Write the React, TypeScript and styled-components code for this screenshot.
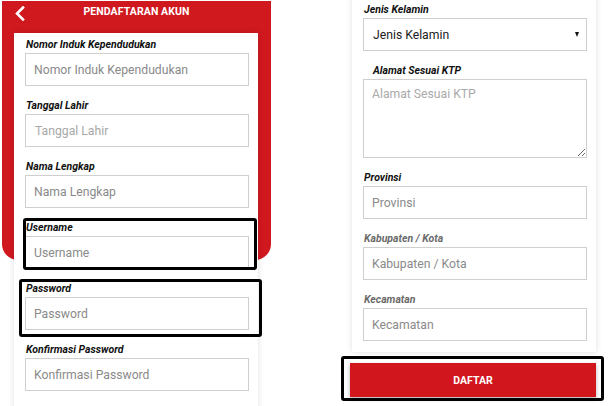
import React from "react"
import styled, { createGlobalStyle } from "styled-components"

const GlobalStyle = createGlobalStyle`
  html, body {
    margin: 0;
    padding: 0;
    background: #fff;
  }
  body {
    font-family: Roboto, "Liberation Sans", Arial, sans-serif;
  }
`

interface Box {
  top: number
  right: number
  bottom: number
  left: number
}

interface FieldProps {
  label: string
  placeholder: string
  muted?: boolean
  indent?: boolean
  faint?: boolean
}

const Field: React.FC<FieldProps> = ({ label, placeholder, muted, indent, faint }) => (
  <S.Field>
    <S.Label $muted={muted} $indent={indent}>{label}</S.Label>
    <S.Input placeholder={placeholder} $faint={faint} readOnly />
  </S.Field>
)

const BackIcon = () => (
  <svg width="10" height="15" viewBox="0 0 10 15">
    <polyline points="8,1.5 2,7.5 8,13.5" fill="none" stroke="#fff" strokeWidth="2.6" strokeLinecap="square" />
  </svg>
)

export default function App() {
  return (
    <>
      <GlobalStyle />
      <S.Page>
        <S.Screen>
          <S.Header>
            <S.TopBar>
              <S.BackButton>
                <BackIcon />
              </S.BackButton>
              <S.Title>PENDAFTARAN AKUN</S.Title>
            </S.TopBar>
          </S.Header>
          <S.Card $overlap>
            <Field label="Nomor Induk Kependudukan" placeholder="Nomor Induk Kependudukan" />
            <Field label="Tanggal Lahir" placeholder="Tanggal Lahir" faint />
            <Field label="Nama Lengkap" placeholder="Nama Lengkap" />
            <S.Highlight $box={{ top: -3, right: -8, bottom: -1, left: -2 }}>
              <Field label="Username" placeholder="Username" />
            </S.Highlight>
            <S.Highlight $box={{ top: -3, right: -13, bottom: -7, left: -6 }}>
              <Field label="Password" placeholder="Password" />
            </S.Highlight>
            <Field label="Konfirmasi Password" placeholder="Konfirmasi Password" />
          </S.Card>
        </S.Screen>

        <S.Screen $right>
          <S.Card $scrolled>
            <S.Field>
              <S.Label>Jenis Kelamin</S.Label>
              <S.Select>
                <span>Jenis Kelamin</span>
                <S.Caret />
              </S.Select>
            </S.Field>
            <S.Field>
              <S.Label $indent>Alamat Sesuai KTP</S.Label>
              <S.TextArea placeholder="Alamat Sesuai KTP" readOnly />
            </S.Field>
            <Field label="Provinsi" placeholder="Provinsi" />
            <Field label="Kabupaten / Kota" placeholder="Kabupaten / Kota" muted />
            <Field label="Kecamatan" placeholder="Kecamatan" muted />
          </S.Card>
          <S.Highlight $box={{ top: -7, right: -8, bottom: -4, left: -9 }} $button>
            <S.Button>DAFTAR</S.Button>
          </S.Highlight>
        </S.Screen>
      </S.Page>
    </>
  )
}

const RED = "#d0181f"
const FONT = `Roboto, "Liberation Sans", Arial, sans-serif`

const S = {
  Page: styled.div`
    display: flex;
    align-items: flex-start;
    gap: 69px;
    height: 406px;
    padding: 1px 0 0 2px;
    box-sizing: border-box;
    overflow: hidden;
  `,
  Screen: styled.div<{ $right?: boolean }>`
    width: 269px;
    flex: none;
    display: flex;
    flex-direction: column;
    margin-top: ${(p) => (p.$right ? "-1px" : "0")};
  `,
  Header: styled.div`
    height: 259px;
    background: ${RED};
    border-radius: 0 0 16px 16px;
  `,
  TopBar: styled.div`
    height: 21px;
    display: grid;
    grid-template-columns: 24px 1fr 24px;
    align-items: center;
  `,
  BackButton: styled.div`
    display: flex;
    padding: 4px 0 0 13px;
  `,
  Title: styled.div`
    text-align: center;
    color: #fff;
    font-size: 10.5px;
    font-weight: 700;
    letter-spacing: 0.1px;
  `,
  Card: styled.div<{ $overlap?: boolean; $scrolled?: boolean }>`
    position: relative;
    background: #fff;
    margin: 0 13px 0 12px;
    padding: 5px 9px 11px 11px;
    box-shadow: 0 0 6px rgba(0, 0, 0, 0.13);
    ${(p) => p.$overlap && "margin-top: -227px; padding-bottom: 40px;"}
    ${(p) => p.$scrolled && "margin-top: -20px; padding-top: 23px;"}
  `,
  Field: styled.div`
    display: flex;
    flex-direction: column;
    margin-bottom: 13px;
    &:last-child {
      margin-bottom: 0;
    }
  `,
  Label: styled.label<{ $muted?: boolean; $indent?: boolean }>`
    display: block;
    height: 14px;
    line-height: 14px;
    margin-bottom: 1px;
    padding-left: ${(p) => (p.$indent ? "10px" : "1px")};
    font-size: 10.5px;
    font-weight: 700;
    font-style: italic;
    color: ${(p) => (p.$muted ? "#6b6b6b" : "#111")};
  `,
  Input: styled.input<{ $faint?: boolean }>`
    box-sizing: border-box;
    width: 100%;
    height: 33px;
    margin: 0;
    padding: 0 8px;
    border: 1px solid #cfcfcf;
    border-radius: 0;
    font-family: ${FONT};
    font-size: 12.2px;
    outline: none;
    background: #fff;
    &::placeholder {
      color: ${(p) => (p.$faint ? "#a8a8a8" : "#8a8a8a")};
    }
    ${(p) => p.$faint && "text-indent: 1px;"}
  `,
  Select: styled.div`
    box-sizing: border-box;
    height: 33px;
    display: flex;
    align-items: center;
    justify-content: space-between;
    padding: 0 7px 0 9px;
    border: 1px solid #cfcfcf;
    font-size: 12.2px;
    color: #222;
  `,
  Caret: styled.span`
    width: 0;
    height: 0;
    border-left: 2.5px solid transparent;
    border-right: 2.5px solid transparent;
    border-top: 5px solid #111;
  `,
  TextArea: styled.textarea`
    box-sizing: border-box;
    width: 100%;
    height: 79px;
    margin: 0;
    padding: 7px 8px;
    border: 1px solid #cfcfcf;
    border-radius: 0;
    resize: vertical;
    font-family: ${FONT};
    font-size: 12.2px;
    outline: none;
    &::placeholder {
      color: #aaaaaa;
    }
  `,
  Highlight: styled.div<{ $box: Box; $button?: boolean }>`
    position: relative;
    margin: ${(p) => (p.$button ? "11px 13px 0 10px" : "0 0 13px 0")};
    &::after {
      content: "";
      position: absolute;
      top: ${(p) => p.$box.top}px;
      right: ${(p) => p.$box.right}px;
      bottom: ${(p) => p.$box.bottom}px;
      left: ${(p) => p.$box.left}px;
      border: 3px solid #000;
      border-radius: 3px;
      pointer-events: none;
    }
  `,
  Button: styled.div`
    height: 34px;
    display: flex;
    align-items: center;
    justify-content: center;
    background: #d2161d;
    color: #fff;
    font-size: 10.5px;
    font-weight: 700;
    box-shadow: 0 2px 4px rgba(0, 0, 0, 0.3);
  `,
}
